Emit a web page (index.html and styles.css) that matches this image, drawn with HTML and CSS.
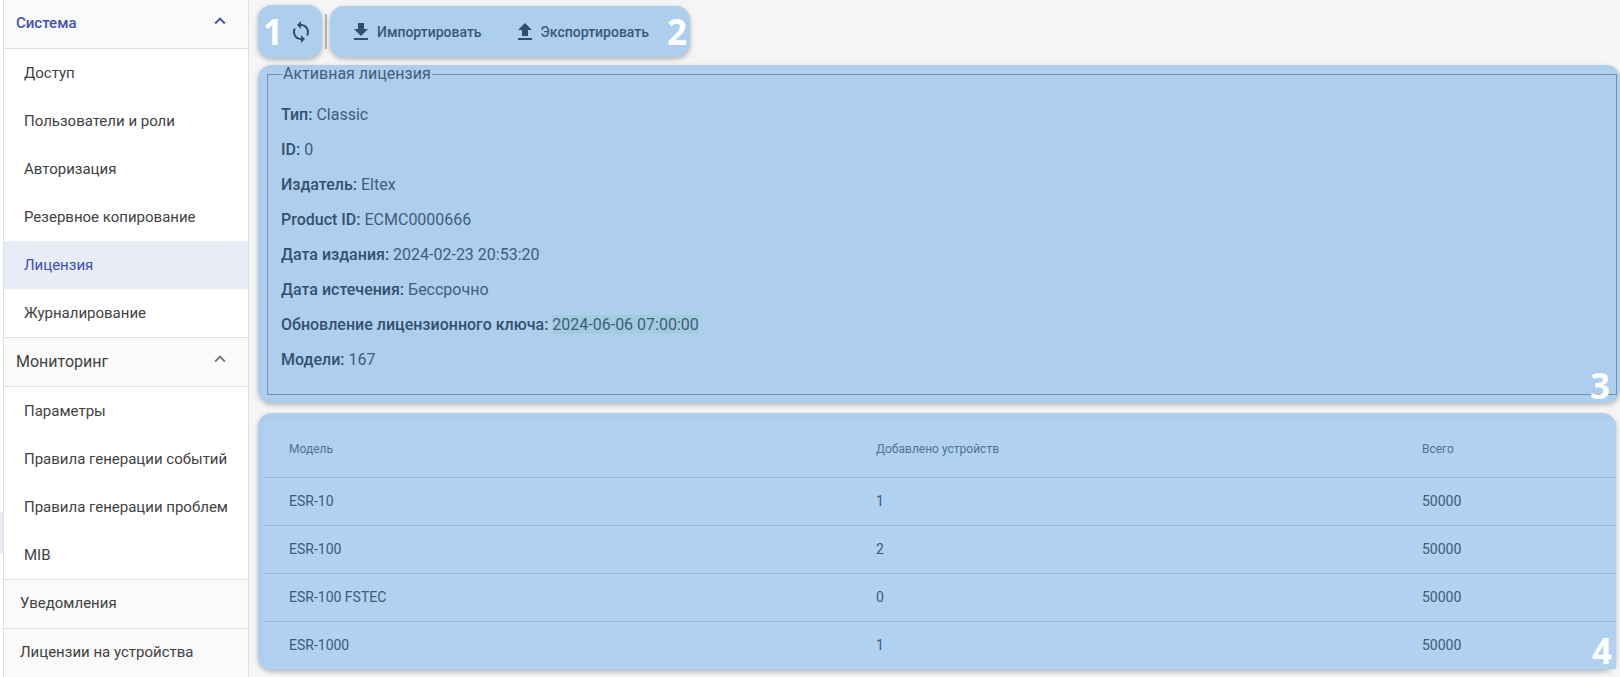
FILE: index.html
```html
<!DOCTYPE html>
<html lang="ru">
<head>
<meta charset="utf-8">
<title>Лицензия</title>
<link rel="stylesheet" href="styles.css">
</head>
<body>
<div class="gutter"><div class="gutter-mark"></div></div>
<nav class="sidebar">
  <div class="group-head active"><span>Система</span>
    <svg class="chev" viewBox="0 0 24 24"><path d="M7.41 15.41L12 10.83l4.59 4.58L18 14l-6-6-6 6z"/></svg></div>
  <ul class="items">
    <li>Доступ</li>
    <li>Пользователи и роли</li>
    <li>Авторизация</li>
    <li>Резервное копирование</li>
    <li class="current">Лицензия</li>
    <li>Журналирование</li>
  </ul>
  <div class="group-head"><span>Мониторинг</span>
    <svg class="chev" viewBox="0 0 24 24"><path d="M7.41 15.41L12 10.83l4.59 4.58L18 14l-6-6-6 6z"/></svg></div>
  <ul class="items">
    <li>Параметры</li>
    <li>Правила генерации событий</li>
    <li>Правила генерации проблем</li>
    <li>MIB</li>
  </ul>
  <div class="group-head plain"><span>Уведомления</span></div>
  <div class="group-head plain"><span>Лицензии на устройства</span></div>
</nav>
<main class="content">
  <div class="toolbar">
    <div class="tool-box refresh">
      <span class="num num-1">1</span>
      <svg class="icon" viewBox="0 0 24 24"><path d="M12 4V1L8 5l4 4V6c3.31 0 6 2.69 6 6 0 1.01-.25 1.97-.7 2.8l1.46 1.46C19.54 15.03 20 13.57 20 12c0-4.42-3.58-8-8-8zm0 14c-3.31 0-6-2.69-6-6 0-1.01.25-1.97.7-2.8L5.24 7.74C4.46 8.97 4 10.43 4 12c0 4.42 3.58 8 8 8v3l4-4-4-4v3z"/></svg>
    </div>
    <div class="divider"></div>
    <div class="tool-box actions">
      <button class="btn"><svg class="icon" viewBox="0 0 24 24"><path d="M19 9h-4V3H9v6H5l7 7 7-7zM5 18v2h14v-2H5z"/></svg>Импортировать</button>
      <button class="btn"><svg class="icon" viewBox="0 0 24 24"><path d="M9 16h6v-6h4l-7-7-7 7h4zm-4 2h14v2H5z"/></svg>Экспортировать</button>
      <span class="num num-2">2</span>
    </div>
  </div>
  <section class="card license">
    <fieldset class="license-set">
      <legend>Активная лицензия</legend>
      <p><b>Тип:</b> Classic</p>
      <p><b>ID:</b> 0</p>
      <p><b>Издатель:</b> Eltex</p>
      <p><b>Product ID:</b> ECMC0000666</p>
      <p><b>Дата издания:</b> 2024-02-23 20:53:20</p>
      <p><b>Дата истечения:</b> Бессрочно</p>
      <p><b>Обновление лицензионного ключа:</b> <mark>2024-06-06 07:00:00</mark></p>
      <p><b>Модели:</b> 167</p>
    </fieldset>
    <span class="num num-3">3</span>
  </section>
  <section class="card models">
    <table>
      <thead><tr><th class="c1">Модель</th><th class="c2">Добавлено устройств</th><th>Всего</th></tr></thead>
      <tbody>
        <tr><td>ESR-10</td><td>1</td><td>50000</td></tr>
        <tr><td>ESR-100</td><td>2</td><td>50000</td></tr>
        <tr><td>ESR-100 FSTEC</td><td>0</td><td>50000</td></tr>
        <tr><td>ESR-1000</td><td>1</td><td>50000</td></tr>
      </tbody>
    </table>
    <span class="num num-4">4</span>
  </section>
</main>
</body>
</html>
```
FILE: styles.css
```css
* { box-sizing: border-box; }
html, body { margin: 0; height: 677px; overflow: hidden; }
body {
  display: flex;
  background: #f5f5f5;
  font-family: Roboto, "Liberation Sans", sans-serif;
  color: #424242;
}
.gutter { width: 3px; background: #fff; flex: none; padding-top: 512px; }
.gutter-mark { height: 42px; background: #e8ecf6; }
.sidebar {
  width: 246px;
  flex: none;
  background: #fff;
  border-left: 1px solid #e0e0e0;
  border-right: 1px solid #e0e0e0;
  font-size: 15px;
}
.group-head {
  height: 49px;
  padding: 0 17px 2px 12px;
  display: flex;
  align-items: center;
  justify-content: space-between;
  background: #fafafa;
  border-bottom: 1px solid #e0e0e0;
  font-size: 16px;
}
.group-head.active { color: #3f51b5; font-weight: 500; font-size: 15px; }
.group-head.active .chev { fill: #3f51b5; }
.group-head.plain { padding-left: 16px; height: 49px; font-size: 15px; }
.chev { width: 22px; height: 22px; fill: #757575; margin: -5px 0 0 0; }
.items { list-style: none; margin: 0; padding: 0; border-bottom: 1px solid #e0e0e0; }
.items li { height: 48px; line-height: 48px; padding-left: 20px; }
.items li.current { background: #e8ecf6; color: #3f51b5; }
.content {
  flex: 1;
  min-width: 0;
  padding: 5px 0 0 9px;
  display: flex;
  flex-direction: column;
}
.toolbar { display: flex; align-items: center; height: 53px; gap: 3px; }
.tool-box {
  background: #adcfed;
  border-radius: 14px;
  box-shadow: 0 2px 5px rgba(0,0,0,.28);
  display: flex;
  align-items: center;
  position: relative;
  color: #33516f;
}
.refresh { width: 64px; height: 53px; padding-left: 31px; }
.actions { width: 360px; height: 51px; padding-left: 19px; gap: 31px; }
.divider { width: 2px; height: 35px; background: #b5b5b5; }
.icon { width: 24px; height: 24px; fill: #2f4d6d; flex: none; }
.btn {
  border: 0;
  background: none;
  font: 500 14px Roboto, sans-serif;
  color: #38577a;
  display: flex;
  align-items: center;
  gap: 4px;
  padding: 0;
  height: 36px;
}
.num {
  position: absolute;
  font: 700 35px "Open Sans", sans-serif;
  color: #fff;
  line-height: 1;
}
.num-1 { left: 5px; top: 9px; }
.num-2 { right: 3px; top: 8px; }
.num-3 { right: 10px; bottom: 0; }
.num-4 { right: 4px; bottom: 2px; }
.card {
  position: relative;
  border-radius: 14px;
  background: #adcfed;
  box-shadow: 0 2px 5px rgba(0,0,0,.25);
}
.license { margin-top: 7px; height: 338px; padding: 1px 3px 8px 9px; }
.license-set {
  margin: 0;
  height: 100%;
  padding: 23px 13px 0 13px;
  border: 1px solid #6e93b6;
}
.license-set legend {
  padding: 0 1px;
  margin-left: 1px;
  font-size: 16px;
  line-height: 16px;
  color: #3f5f80;
}
.license-set p {
  margin: 0 0 16px;
  height: 19px;
  font-size: 16px;
  line-height: 19px;
  color: #3f5c7c;
}
.license-set b { font-weight: 500; color: #34506f; }
mark { background: #a3cbdf; color: inherit; }
.models {
  margin-top: 10px;
  width: 1358px;
  height: 257px;
  padding: 8px 0 0 6px;
}
table { width: 100%; border-collapse: collapse; background: #b0d1f0; table-layout: fixed; }
th, td { padding: 0 0 0 25px; text-align: left; }
th {
  height: 56px;
  font-size: 12px;
  font-weight: 400;
  color: #4f7196;
}
td {
  height: 48px;
  font-size: 14px;
  color: #3c5b7c;
  border-top: 1px solid #98b9d8;
}
.c1 { width: 587px; }
.c2 { width: 546px; }
```
